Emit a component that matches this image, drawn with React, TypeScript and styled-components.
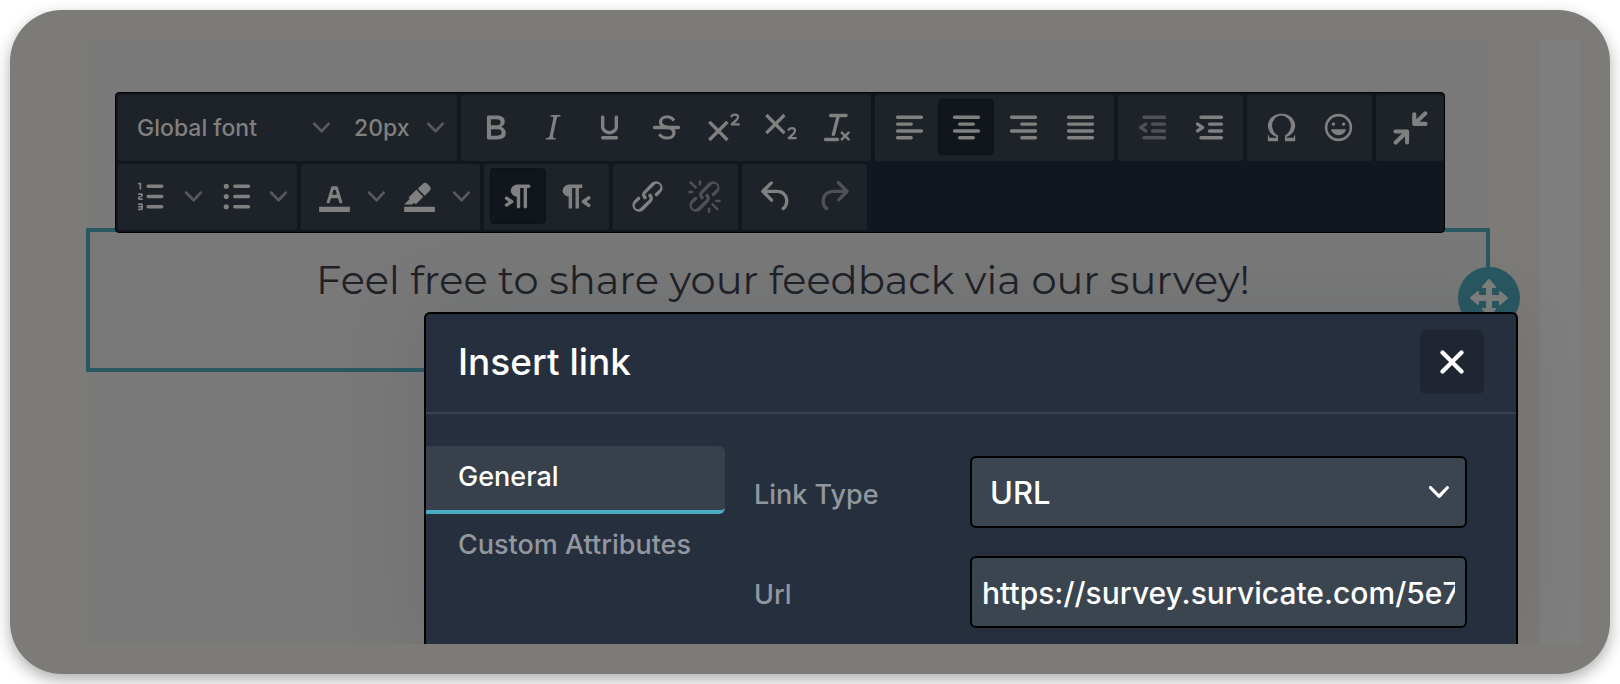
import React from "react";
import styled, { createGlobalStyle } from "styled-components";

const UI_FONT = `Inter, "Liberation Sans", sans-serif`;

const GlobalStyle = createGlobalStyle`
  *, *::before, *::after { box-sizing: border-box; }
  body { margin: 0; background: #ffffff; font-family: ${UI_FONT}; }
  button, input, select { font: inherit; margin: 0; }
`;

const Page = styled.main`
  display: flex;
  min-height: 100vh;
  padding: 10px;
`;

const Frame = styled.div`
  display: flex;
  flex: 1;
  min-width: 0;
  padding: 30px 30px 30px 76px;
  border-radius: 52px;
  background: #7d7b78;
  box-shadow: 0 6px 16px rgba(0, 0, 0, 0.32);
`;

const Workspace = styled.div`
  position: relative;
  display: flex;
  flex: 1;
  min-width: 0;
  gap: 52px;
  padding-left: 2px;
  overflow: hidden;
`;

const Canvas = styled.section`
  flex: 1;
  min-width: 0;
  background: #797979;
`;

const SideStrip = styled.aside`
  flex: 0 0 40px;
  background: #7f7f7f;
`;

const Toolbar = styled.div`
  position: relative;
  z-index: 1;
  display: flex;
  flex-wrap: wrap;
  gap: 3px 4px;
  margin: 52px 43px 0 27px;
  padding: 2px 0 2px 2px;
  border: 1px solid #000000;
  border-radius: 4px;
  background: #12171f;
`;

const Group = styled.div<{ $split?: boolean; $wide?: boolean }>`
  display: flex;
  gap: ${(p) => (p.$wide ? 4 : 1)}px;
  height: 66px;
  padding: 4px ${(p) => (p.$split ? 5 : 6)}px 6px;
  border-radius: 3px;
  background: #1e2229;
`;

const ToolButton = styled.button<{ $active?: boolean }>`
  display: flex;
  align-items: center;
  justify-content: center;
  width: 56px;
  height: 56px;
  padding: 0;
  border: 1px solid ${(p) => (p.$active ? "#0e1217" : "transparent")};
  border-radius: 4px;
  background: ${(p) => (p.$active ? "#11161d" : "transparent")};
  color: #808080;

  &:disabled {
    color: #4f5154;
  }
`;

const SplitButton = styled.div`
  display: flex;
`;

const ChevronButton = styled.button`
  display: flex;
  align-items: center;
  justify-content: center;
  width: 28px;
  height: 56px;
  padding: 0;
  border: 0;
  background: none;
  color: #57595c;
`;

const ToolSelect = styled.label<{ $width: number }>`
  display: grid;
  align-items: center;
  width: ${(p) => p.$width}px;
  color: #57595c;

  > * {
    grid-area: 1 / 1;
  }

  > svg {
    justify-self: end;
    margin-right: 7px;
    pointer-events: none;
  }

  > select {
    appearance: none;
    width: 100%;
    height: 56px;
    padding: 2px 28px 0 13px;
    border: 0;
    background: none;
    color: #808080;
    font-size: 23px;
    font-weight: 500;
  }
`;

const SelectedBlock = styled.div`
  position: relative;
  height: 144px;
  margin: -5px -2px 0;
  padding: 20px 10px 0 0;
  border: 4px solid #295862;
`;

const BlockText = styled.p`
  margin: 0;
  color: #1f2127;
  font-family: Montserrat, Inter, sans-serif;
  font-size: 40px;
  line-height: 56px;
  text-align: center;
  white-space: nowrap;
`;

const MoveHandle = styled.button`
  position: absolute;
  top: 50%;
  right: -34px;
  display: flex;
  align-items: center;
  justify-content: center;
  width: 62px;
  height: 62px;
  margin-top: -33px;
  padding: 0;
  border: 0;
  border-radius: 50%;
  background: #295862;
  color: #7f7f7f;
`;

const Dialog = styled.div`
  position: absolute;
  z-index: 2;
  top: 272px;
  right: 62px;
  bottom: 0;
  left: 338px;
  overflow: clip;
  border: 2px solid #000000;
  border-bottom: 0;
  border-radius: 6px 6px 0 0;
  background: #262f3e;
  box-shadow: 0 0 80px 2px rgba(34, 47, 62, 0.15);
`;

const DialogHeader = styled.header`
  display: flex;
  align-items: flex-start;
  justify-content: space-between;
  height: 100px;
  padding: 16px 32px;
  border-bottom: 2px solid #394252;
`;

const DialogTitle = styled.h1`
  margin: 0;
  color: #ffffff;
  font-size: 37px;
  font-weight: 500;
  line-height: 64px;
`;

const CloseButton = styled.button`
  display: flex;
  align-items: center;
  justify-content: center;
  width: 64px;
  height: 64px;
  padding: 0;
  border: 0;
  border-radius: 6px;
  background: #1f2631;
  color: #ffffff;
`;

const DialogBody = styled.div`
  display: flex;
  gap: 29px;
  padding: 32px 49px 0 0;
`;

const Tabs = styled.nav`
  display: flex;
  flex-direction: column;
  flex: 0 0 299px;
`;

const Tab = styled.button<{ $active?: boolean }>`
  height: 68px;
  padding: 0 0 2px 32px;
  border: 0;
  border-bottom: 4px solid ${(p) => (p.$active ? "#4daac4" : "transparent")};
  border-radius: 0 6px 6px 0;
  background: ${(p) => (p.$active ? "#37404b" : "transparent")};
  color: ${(p) => (p.$active ? "#ffffff" : "#92979e")};
  font-size: 27px;
  font-weight: 500;
  line-height: 60px;
  text-align: left;
`;

const Fields = styled.form`
  display: flex;
  flex: 1;
  flex-direction: column;
  gap: 28px;
  min-width: 0;
  padding-top: 10px;
`;

const Field = styled.div`
  display: grid;
  grid-template-columns: 216px minmax(0, 1fr);
  align-items: center;
`;

const FieldLabel = styled.label`
  padding-top: 4px;
  color: #92979e;
  font-size: 27px;
  font-weight: 500;
`;

const SelectBox = styled.div`
  display: grid;
  align-items: center;
  color: #ffffff;

  > * {
    grid-area: 1 / 1;
  }

  > svg {
    justify-self: end;
    margin-right: 18px;
    pointer-events: none;
  }
`;

const fieldBox = `
  width: 100%;
  height: 72px;
  border: 2px solid #000000;
  border-radius: 6px;
  background: #3b4550;
  color: #ffffff;
  outline: none;
`;

const FieldSelect = styled.select`
  ${fieldBox}
  appearance: none;
  padding: 0 40px 0 18px;
  && { font-size: 31px; font-weight: 500; }
`;

const FieldInput = styled.input`
  ${fieldBox}
  padding: 2px 10px 0;
  && { font-size: 30px; font-weight: 500; }
`;

const bar = (x: number, y: number, w: number) =>
  `M${x + 1} ${y}h${w - 2}a1 1 0 0 1 0 2h-${w - 2}a1 1 0 0 1 0-2z`;

const LINK =
  "M6.2 12.3a1 1 0 0 1 1.4 1.4l-2.1 2a2 2 0 1 0 2.7 2.8l4.8-4.8a1 1 0 0 0 0-1.4 1 1 0 1 1 1.4-1.3 2.9 2.9 0 0 1 0 4L9.6 20a3.9 3.9 0 0 1-5.5-5.5l2-2zm11.6-.6a1 1 0 0 1-1.4-1.4l2-2a2 2 0 1 0-2.6-2.8L11 10.3a1 1 0 0 0 0 1.4A1 1 0 1 1 9.6 13a2.9 2.9 0 0 1 0-4L14.4 4a3.9 3.9 0 0 1 5.5 5.5l-2 2z";

const ICONS = {
  bold: "M7.8 19c-.3 0-.5 0-.6-.2l-.2-.5V5.7c0-.2 0-.4.2-.5l.6-.2h5c1.5 0 2.7.3 3.5 1 .7.6 1.1 1.4 1.1 2.5a3 3 0 0 1-.6 1.9c-.4.6-1 1-1.6 1.2.4.1.9.3 1.3.6s.8.7 1 1.2c.4.4.5 1 .5 1.6 0 1.3-.4 2.3-1.3 3-.8.7-2.1 1-3.8 1H7.8zm5-8.3c.6 0 1.2-.1 1.6-.5.4-.3.6-.7.6-1.3 0-1.1-.8-1.7-2.3-1.7H9.3v3.5h3.4zm.5 6c.7 0 1.3-.1 1.7-.4.4-.4.6-.9.6-1.5s-.2-1-.7-1.4c-.4-.3-1-.4-2-.4H9.4v3.8h4z",
  italic:
    "M16.7 4.7l-.1.9h-.3c-.6 0-1 0-1.4.3-.3.3-.4.6-.5 1.1l-2.1 9.8v.6c0 .5.4.8 1.4.8h.2l-.2.8H8l.2-.8h.2c1.1 0 1.8-.5 2-1.5l2-9.8.1-.5c0-.6-.4-.8-1.4-.8h-.3l.2-.9h5.8z",
  underline:
    "M16 5c.6 0 1 .4 1 1v5.5a4 4 0 0 1-.4 1.8l-1 1.4a5.3 5.3 0 0 1-5.5 1 5 5 0 0 1-1.6-1c-.5-.4-.8-.9-1.1-1.4a4 4 0 0 1-.4-1.8V6c0-.6.4-1 1-1s1 .4 1 1v5.5c0 .3 0 .6.2 1l.6.7a3.3 3.3 0 0 0 2.2.8 3.4 3.4 0 0 0 2.2-.8c.3-.2.4-.5.6-.8l.2-.9V6c0-.6.4-1 1-1zM8 17h8c.6 0 1 .4 1 1s-.4 1-1 1H8a1 1 0 0 1 0-2z",
  strike:
    "M15.6 8.5c-.5-.7-1-1.1-1.3-1.3-.6-.4-1.3-.6-2-.6-2.7 0-2.8 1.7-2.8 2.1 0 1.6 1.8 2 3.2 2.3 4.4.9 4.6 2.8 4.6 3.9 0 1.4-.7 4.1-5 4.1A6.2 6.2 0 0 1 7 16.4l1.5-1.1c.4.6 1.6 2 3.7 2 1.6 0 2.5-.4 3-1.2.4-.8.3-2-.8-2.6-.7-.4-1.6-.7-2.9-1-1-.2-3.9-.8-3.9-3.6C7.6 6 10.3 5 12.4 5c2.9 0 4.2 1.6 4.7 2.4l-1.5 1.1z",
  superscript:
    "M15 9.4L10.4 14l4.6 4.6-1.4 1.4L9 15.4 4.4 20 3 18.6 7.6 14 3 9.4 4.4 8 9 12.6 13.6 8 15 9.4z",
  subscript:
    "M15 5.4L10.4 10l4.6 4.6-1.4 1.4L9 11.4 4.4 16 3 14.6 7.6 10 3 5.4 4.4 4 9 8.6 13.6 4 15 5.4z",
  clear:
    "M13.2 6a1 1 0 0 1 0 .2l-2.6 10a1 1 0 0 1-1 .8h-.2a.8.8 0 0 1-.8-1l2.6-10H8a1 1 0 1 1 0-2h9a1 1 0 0 1 0 2h-3.8zM5 18h7a1 1 0 0 1 0 2H5a1 1 0 0 1 0-2zm13 1.5L16.5 18 15 19.5a.7.7 0 0 1-1-1l1.5-1.5-1.5-1.5a.7.7 0 0 1 1-1l1.5 1.5 1.5-1.5a.7.7 0 0 1 1 1L17.5 17l1.5 1.5a.7.7 0 0 1-1 1z",
  alignLeft: bar(4, 5, 16) + bar(4, 9, 10) + bar(4, 13, 16) + bar(4, 17, 10),
  alignCenter: bar(4, 5, 16) + bar(7, 9, 10) + bar(4, 13, 16) + bar(7, 17, 10),
  alignRight: bar(4, 5, 16) + bar(10, 9, 10) + bar(4, 13, 16) + bar(10, 17, 10),
  justify: bar(4, 5, 16) + bar(4, 9, 16) + bar(4, 13, 16) + bar(4, 17, 16),
  outdent:
    bar(6, 5, 14) + bar(11, 9, 9) + bar(11, 13, 9) + bar(6, 17, 14) +
    "M8.6 13.2a1 1 0 0 1-1.2 1.6l-3-2a1 1 0 0 1 0-1.6l3-2a1 1 0 0 1 1.2 1.6L6.8 12l1.8 1.2z",
  indent:
    bar(6, 5, 14) + bar(11, 9, 9) + bar(11, 13, 9) + bar(6, 17, 14) +
    "M4.4 13.2L6.2 12l-1.8-1.2a1 1 0 0 1 1.2-1.6l3 2a1 1 0 0 1 0 1.6l-3 2a1 1 0 1 1-1.2-1.6z",
  omega:
    "M15 18h4l1-2v4h-6v-3.3l1.4-1a6 6 0 0 0 1.8-2.9 6.3 6.3 0 0 0-.1-4.1 5.8 5.8 0 0 0-3-3.2c-.6-.3-1.3-.5-2.1-.5a5.1 5.1 0 0 0-3.9 1.8 6.3 6.3 0 0 0-1.3 6 6.2 6.2 0 0 0 1.8 3l1.4.9V20H4v-4l1 2h4v-.5l-2-1L5.4 15A6.5 6.5 0 0 1 4 11c0-1 .2-1.9.6-2.7A7 7 0 0 1 7.8 5C9.1 4.3 10.5 4 12 4c1.5 0 2.8.3 4.1.9a7 7 0 0 1 3.3 3.4 6.4 6.4 0 0 1 .6 2.7c0 1.5-.5 2.8-1.4 4L17 16.5l-2 1v.5z",
  emoji:
    "M9 11c.6 0 1-.4 1-1s-.4-1-1-1a1 1 0 0 0-1 1c0 .6.4 1 1 1zm6 0c.6 0 1-.4 1-1s-.4-1-1-1a1 1 0 0 0-1 1c0 .6.4 1 1 1zm-3 5.5c2.1 0 4-1.5 4.4-3.5H7.6c.5 2 2.3 3.5 4.4 3.5zM12 4a8 8 0 1 0 0 16 8 8 0 0 0 0-16zm0 14.5a6.5 6.5 0 1 1 0-13 6.5 6.5 0 0 1 0 13z",
  ordered:
    bar(9, 17, 10) + bar(9, 11, 10) + bar(9, 5, 10) +
    "M6 4v3.5c0 .3-.2.5-.5.5a.5.5 0 0 1-.5-.5V5h-.5a.5.5 0 0 1 0-1H6zm-1 8.8l.2.2h1.3c.3 0 .5.2.5.5s-.2.5-.5.5H4.9a1 1 0 0 1-.9-1V13c0-.4.3-.8.6-1l1.2-.4.2-.3a.2.2 0 0 0-.2-.2H4.5a.5.5 0 0 1-.5-.5c0-.3.2-.5.5-.5h1.6c.5 0 .9.4.9 1v.1c0 .4-.3.8-.6 1l-1.2.4-.2.3zM7 17v2c0 .6-.4 1-1 1H4.5a.5.5 0 0 1 0-1h1.2c.2 0 .3-.1.3-.3 0-.2-.1-.3-.3-.3H4.4a.4.4 0 1 1 0-.8h1.3c.2 0 .3-.1.3-.3 0-.2-.1-.3-.3-.3H4.5a.5.5 0 1 1 0-1H6c.6 0 1 .4 1 1z",
  bullets:
    bar(10, 5, 10) + bar(10, 11, 10) + bar(10, 17, 10) +
    [6, 12, 18].map((y) => `M4.5 ${y}a1.5 1.5 0 1 0 3 0 1.5 1.5 0 1 0-3 0z`).join(""),
  textColor:
    "M3 18h18v3H3zM8.7 16h-.8a.5.5 0 0 1-.5-.6l2.7-9c.1-.3.3-.4.5-.4h2.8c.2 0 .4.1.5.4l2.7 9a.5.5 0 0 1-.5.6h-.8a.5.5 0 0 1-.4-.4l-.7-2.2c0-.3-.3-.4-.5-.4h-3.4c-.2 0-.4.1-.5.4l-.7 2.2c0 .3-.2.4-.4.4zm2.6-7.6l-.6 2a.5.5 0 0 0 .5.6h1.6a.5.5 0 0 0 .5-.6l-.6-2c0-.3-.3-.4-.5-.4h-.4c-.2 0-.4.1-.5.4z",
  highlight:
    "M3 18h18v3H3zM7.7 16.7H3l3.3-3.3-.7-.8L10.2 8l4 4.1-4 4.2c-.2.2-.6.2-.8 0l-.6-.7-1.1 1.1zm5-7.5L11 7.4l3-2.9a2 2 0 0 1 2.6 0L18 6c.7.7.7 2 0 2.7l-2.9 2.9-1.8-1.8-.5-.6z",
  ltr: "M11 5h7a1 1 0 0 1 0 2h-1v11a1 1 0 0 1-2 0V7h-2v11a1 1 0 0 1-2 0v-6c-.5 0-1 0-1.4-.3A3.4 3.4 0 0 1 7.8 10a3.3 3.3 0 0 1 0-2.8 3.4 3.4 0 0 1 1.8-1.8L11 5zM4.4 16.2L6.2 15l-1.8-1.2a1 1 0 0 1 1.2-1.6l3 2a1 1 0 0 1 0 1.6l-3 2a1 1 0 1 1-1.2-1.6z",
  rtl: "M8 5h8v2h-2v12h-2V7h-2v12H8v-7c-.5 0-1 0-1.4-.3A3.4 3.4 0 0 1 4.8 10a3.3 3.3 0 0 1 0-2.8 3.4 3.4 0 0 1 1.8-1.8L8 5zM20.1 16.2a1 1 0 1 1-1.1 1.6l-3-2a1 1 0 0 1 0-1.6l3-2a1 1 0 1 1 1.1 1.6L18.4 15l1.7 1.2z",
  link: LINK,
  unlink:
    LINK +
    "M7.6 6.3a.8.8 0 0 1-1 1.1L3.3 4.2a.7.7 0 1 1 1-1l3.2 3.1zM5.1 8.6a.8.8 0 0 1 0 1.5H3a.8.8 0 0 1 0-1.5H5zm5-3.5a.8.8 0 0 1-1.5 0V3a.8.8 0 0 1 1.5 0V5zm6 11.8a.8.8 0 0 1 1-1l3.2 3.2a.8.8 0 0 1-1 1L16 17zm-2.2 2a.8.8 0 0 1 1.5 0V21a.8.8 0 0 1-1.5 0V19zm5-3.5a.7.7 0 1 1 0-1.5H21a.8.8 0 0 1 0 1.5H19z",
  undo: "M6.4 8H12c3.7 0 6.2 2 6.8 5.1.6 2.7-.4 5.6-2.3 6.8a1 1 0 0 1-1-1.8c1.1-.6 1.8-2.7 1.4-4.6-.5-2.1-2.1-3.5-4.9-3.5H6.4l3.3 3.3a1 1 0 1 1-1.4 1.4l-5-5a1 1 0 0 1 0-1.4l5-5a1 1 0 0 1 1.4 1.4L6.4 8z",
  redo: "M17.6 10H12c-2.8 0-4.4 1.4-4.9 3.5-.4 2 .3 4 1.4 4.6a1 1 0 1 1-1 1.8c-2-1.2-2.9-4.1-2.3-6.8.6-3 3-5.1 6.8-5.1h5.6l-3.3-3.3a1 1 0 1 1 1.4-1.4l5 5a1 1 0 0 1 0 1.4l-5 5a1 1 0 0 1-1.4-1.4l3.3-3.3z",
  close:
    "M17.3 8.2L13.4 12l3.9 3.8a1 1 0 0 1-1.5 1.5L12 13.4l-3.8 3.9a1 1 0 0 1-1.5-1.5l3.9-3.8-3.9-3.8a1 1 0 0 1 1.5-1.5l3.8 3.9 3.8-3.9a1 1 0 0 1 1.5 1.5z",
  collapse: "",
};

type IconName = keyof typeof ICONS;

/* Stroked parts that complete some of the filled icons */
const STROKES: Partial<Record<IconName, { d: string; width: number }>> = {
  superscript: { d: "M16.7 5.4c.5-.7 1.2-1 2-1 1.1 0 1.8.6 1.8 1.5 0 .8-.5 1.4-1.3 2.1l-2.4 2.2h4.2", width: 1.3 },
  subscript: { d: "M16.7 13.4c.5-.7 1.2-1 2-1 1.1 0 1.8.6 1.8 1.5 0 .8-.5 1.4-1.3 2.1l-2.4 2.2h4.2", width: 1.3 },
  strike: { d: "M5 12h14", width: 2 },
  collapse: {
    d: "M14.2 4.2v5.7h6.6M14.2 9.9l6.5-6.2M3.2 14.3h6.8v6.5M10 14.3l-6.7 6.5",
    width: 2.4,
  },
};

function Icon({ name, size = 41 }: { name: IconName; size?: number }) {
  const extra = STROKES[name];
  return (
    <svg width={size} height={size} viewBox="0 0 24 24" aria-hidden="true">
      <path d={ICONS[name]} fill="currentColor" fillRule="evenodd" />
      {extra && (
        <path
          d={extra.d}
          fill="none"
          stroke="currentColor"
          strokeWidth={extra.width}
          strokeLinecap="round"
          strokeLinejoin="round"
        />
      )}
    </svg>
  );
}

function Chevron({ size = 17 }: { size?: number }) {
  return (
    <svg width={size} height={size} viewBox="0 0 10 10" aria-hidden="true">
      <path
        d="M8.7 2.2c.3-.3.8-.3 1 0 .4.4.4.9 0 1.2L5.7 7.8c-.3.3-.9.3-1.2 0L.2 3.4a.8.8 0 0 1 0-1.2c.3-.3.8-.3 1.1 0L5 6l3.7-3.8z"
        fill="currentColor"
      />
    </svg>
  );
}

type Tool = { icon: IconName; label: string; active?: boolean; disabled?: boolean };

function ToolGroup({ tools }: { tools: Tool[] }) {
  return (
    <Group role="group">
      {tools.map((t) => (
        <ToolButton
          key={t.icon}
          type="button"
          aria-label={t.label}
          aria-pressed={t.active}
          $active={t.active}
          disabled={t.disabled}
        >
          <Icon name={t.icon} />
        </ToolButton>
      ))}
    </Group>
  );
}

function SplitGroup({ tools }: { tools: Tool[] }) {
  return (
    <Group role="group" $split>
      {tools.map((t) => (
        <SplitButton key={t.icon}>
          <ToolButton type="button" aria-label={t.label}>
            <Icon name={t.icon} />
          </ToolButton>
          <ChevronButton type="button" aria-label={`${t.label} options`}>
            <Chevron />
          </ChevronButton>
        </SplitButton>
      ))}
    </Group>
  );
}

export default function App() {
  return (
    <Page>
      <GlobalStyle />
      <Frame>
        <Workspace>
          <Canvas>
            <Toolbar role="toolbar" aria-label="Text formatting">
              <Group role="group" $wide>
                <ToolSelect $width={213}>
                  <select aria-label="Font family">
                    <option>Global font</option>
                  </select>
                  <Chevron />
                </ToolSelect>
                <ToolSelect $width={110}>
                  <select aria-label="Font size">
                    <option>20px</option>
                  </select>
                  <Chevron />
                </ToolSelect>
              </Group>
              <ToolGroup
                tools={[
                  { icon: "bold", label: "Bold" },
                  { icon: "italic", label: "Italic" },
                  { icon: "underline", label: "Underline" },
                  { icon: "strike", label: "Strikethrough" },
                  { icon: "superscript", label: "Superscript" },
                  { icon: "subscript", label: "Subscript" },
                  { icon: "clear", label: "Clear formatting" },
                ]}
              />
              <ToolGroup
                tools={[
                  { icon: "alignLeft", label: "Align left" },
                  { icon: "alignCenter", label: "Align center", active: true },
                  { icon: "alignRight", label: "Align right" },
                  { icon: "justify", label: "Justify" },
                ]}
              />
              <ToolGroup
                tools={[
                  { icon: "outdent", label: "Decrease indent", disabled: true },
                  { icon: "indent", label: "Increase indent" },
                ]}
              />
              <ToolGroup
                tools={[
                  { icon: "omega", label: "Special character" },
                  { icon: "emoji", label: "Emojis" },
                ]}
              />
              <ToolGroup tools={[{ icon: "collapse", label: "Collapse toolbar" }]} />
              <SplitGroup
                tools={[
                  { icon: "ordered", label: "Numbered list" },
                  { icon: "bullets", label: "Bullet list" },
                ]}
              />
              <SplitGroup
                tools={[
                  { icon: "textColor", label: "Text color" },
                  { icon: "highlight", label: "Background color" },
                ]}
              />
              <ToolGroup
                tools={[
                  { icon: "ltr", label: "Left to right", active: true },
                  { icon: "rtl", label: "Right to left" },
                ]}
              />
              <ToolGroup
                tools={[
                  { icon: "link", label: "Insert link" },
                  { icon: "unlink", label: "Remove link", disabled: true },
                ]}
              />
              <ToolGroup
                tools={[
                  { icon: "undo", label: "Undo" },
                  { icon: "redo", label: "Redo", disabled: true },
                ]}
              />
            </Toolbar>
            <SelectedBlock>
              <BlockText>Feel free to share your feedback via our survey!</BlockText>
              <MoveHandle type="button" aria-label="Move block">
                <svg width="40" height="40" viewBox="0 0 40 40" aria-hidden="true">
                  <path
                    d="M20 2l6 7h-4v9h9v-4l7 6-7 6v-4h-9v9h4l-6 7-6-7h4v-9H9v4l-7-6 7-6v4h9V9h-4z"
                    fill="currentColor"
                    stroke="currentColor"
                    strokeWidth="2"
                    strokeLinejoin="round"
                  />
                </svg>
              </MoveHandle>
            </SelectedBlock>
          </Canvas>
          <SideStrip />
          <Dialog role="dialog" aria-labelledby="dialog-title">
            <DialogHeader>
              <DialogTitle id="dialog-title">Insert link</DialogTitle>
              <CloseButton type="button" aria-label="Close">
                <Icon name="close" size={50} />
              </CloseButton>
            </DialogHeader>
            <DialogBody>
              <Tabs>
                <Tab type="button" $active>
                  General
                </Tab>
                <Tab type="button">Custom Attributes</Tab>
              </Tabs>
              <Fields>
                <Field>
                  <FieldLabel htmlFor="link-type">Link Type</FieldLabel>
                  <SelectBox>
                    <FieldSelect id="link-type">
                      <option>URL</option>
                    </FieldSelect>
                    <Chevron size={20} />
                  </SelectBox>
                </Field>
                <Field>
                  <FieldLabel htmlFor="link-url">Url</FieldLabel>
                  <FieldInput
                    id="link-url"
                    type="text"
                    defaultValue="https://survey.survicate.com/5e7a"
                  />
                </Field>
              </Fields>
            </DialogBody>
          </Dialog>
        </Workspace>
      </Frame>
    </Page>
  );
}
